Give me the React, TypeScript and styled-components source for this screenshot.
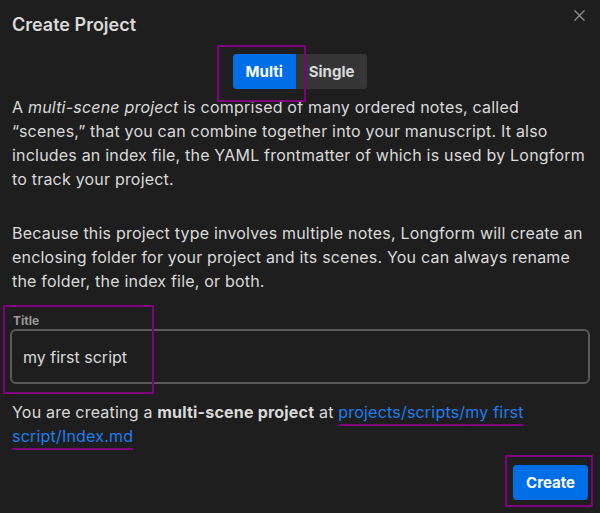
import React, { useState } from 'react';
import styled, { createGlobalStyle } from 'styled-components';

const GlobalStyle = createGlobalStyle`
  html, body {
    margin: 0;
    padding: 0;
    background: #1e1e1e;
  }
  body {
    font-family: Inter, "Noto Sans", sans-serif;
    color: #dadada;
  }
`;

const Modal = styled.div`
  position: relative;
  box-sizing: border-box;
  width: 600px;
  height: 513px;
  padding: 12px 12px 0;
  background: #1e1e1e;
`;

const Title = styled.h1`
  margin: 0;
  font-size: 18px;
  font-weight: 600;
  line-height: 26px;
  color: #dadada;
`;

const CloseButton = styled.button`
  position: absolute;
  top: 6px;
  right: 12px;
  width: 18px;
  height: 18px;
  padding: 0;
  border: none;
  background: none;
  color: #8a8a8a;
  cursor: pointer;
  display: flex;
  align-items: center;
  justify-content: center;
`;

const SegmentRow = styled.div`
  display: flex;
  justify-content: center;
  margin-top: 16px;
`;

const Annotated = styled.div<{ $t: number; $r: number; $b: number; $l: number }>`
  position: relative;
  display: flex;
  &::after {
    content: '';
    position: absolute;
    top: ${(p) => -p.$t}px;
    right: ${(p) => -p.$r}px;
    bottom: ${(p) => -p.$b}px;
    left: ${(p) => -p.$l}px;
    border: 2px solid #800080;
    pointer-events: none;
  }
`;

const Segmented = styled.div`
  display: flex;
  border-radius: 4px;
  background: #363636;
`;

const SegmentButton = styled.button<{ $active: boolean; $side: 'left' | 'right' }>`
  height: 35px;
  padding: 0 13px;
  border: none;
  border-radius: ${(p) => (p.$side === 'left' ? '4px 0 0 4px' : '0 4px 4px 0')};
  font-family: Inter, sans-serif;
  font-size: 15px;
  font-weight: 700;
  color: ${(p) => (p.$active ? '#ffffff' : '#dadada')};
  background: ${(p) => (p.$active ? '#006ee6' : '#363636')};
  cursor: pointer;
`;

const Paragraph = styled.p`
  margin: 6px 0 0;
  font-size: 16px;
  line-height: 24px;
  letter-spacing: 0.2px;
  & + & {
    margin-top: 30px;
  }
`;

const Field = styled.div`
  position: relative;
  margin-top: 21px;
  display: flex;
  flex-direction: column;
`;

const FieldLabel = styled.label`
  font-size: 12px;
  font-weight: 700;
  line-height: 14px;
  color: #9a9a9a;
  margin-left: 1px;
`;

const TextInput = styled.input`
  box-sizing: border-box;
  width: 580px;
  height: 55px;
  margin: 1px 0 0 -2px;
  padding: 0 11px;
  border: 2px solid #5a5a5a;
  border-radius: 6px;
  background: #1e1e1e;
  color: #dadada;
  font-family: Inter, sans-serif;
  font-size: 16px;
  outline: none;
  caret-color: #dadada;
`;

const LabelMark = styled.div`
  position: absolute;
  top: -9px;
  left: -9px;
  width: 151px;
  height: 89px;
  box-sizing: border-box;
  border: 2px solid #800080;
  pointer-events: none;
`;

const Note = styled.p`
  margin: 16px 0 0;
  font-size: 16px;
  line-height: 24px;
  letter-spacing: 0.2px;
  b {
    font-weight: 700;
    color: #dadada;
  }
`;

const PathLink = styled.a`
  color: #1a7ff0;
  text-decoration: underline;
  text-decoration-color: #800080;
  text-decoration-thickness: 2px;
  text-underline-offset: 6px;
`;

const Footer = styled.div`
  display: flex;
  justify-content: flex-end;
  margin-top: 17px;
`;

const PrimaryButton = styled.button`
  height: 35px;
  padding: 0 13px;
  border: none;
  border-radius: 4px;
  background: #006ee6;
  color: #ffffff;
  font-family: Inter, sans-serif;
  font-size: 15px;
  font-weight: 700;
  cursor: pointer;
`;

const CloseIcon = () => (
  <svg width="13" height="13" viewBox="0 0 14 14" fill="none" stroke="currentColor" strokeWidth="1.5" strokeLinecap="round">
    <path d="M2 2 L12 12 M12 2 L2 12" />
  </svg>
);

const App: React.FC = () => {
  const [mode, setMode] = useState<'multi' | 'single'>('multi');
  const [title, setTitle] = useState('my first script');

  return (
    <>
      <GlobalStyle />
      <Modal>
        <Title>Create Project</Title>
        <CloseButton aria-label="Close">
          <CloseIcon />
        </CloseButton>
        <SegmentRow>
          <Segmented>
            <Annotated $t={9} $r={10} $b={13} $l={16}>
              <SegmentButton $side="left" $active={mode === 'multi'} onClick={() => setMode('multi')}>
                Multi
              </SegmentButton>
            </Annotated>
            <SegmentButton $side="right" $active={mode === 'single'} onClick={() => setMode('single')}>
              Single
            </SegmentButton>
          </Segmented>
        </SegmentRow>
        <Paragraph>
          A <em>multi-scene project</em> is comprised of many ordered notes, called “scenes,” that you can combine
          together into your manuscript. It also includes an index file, the YAML frontmatter of which is used by
          Longform to track your project.
        </Paragraph>
        <Paragraph>
          Because this project type involves multiple notes, Longform will create an enclosing folder for your
          project and its scenes. You can always rename the folder, the index file, or both.
        </Paragraph>
        <Field>
          <FieldLabel>Title</FieldLabel>
          <TextInput value={title} onChange={(e) => setTitle(e.target.value)} />
          <LabelMark />
        </Field>
        <Note>
          You are creating a <b>multi-scene project</b> at{' '}
          <PathLink href="#">projects/scripts/{title}/Index.md</PathLink>
        </Note>
        <Footer>
          <Annotated $t={10} $r={5} $b={7} $l={8}>
            <PrimaryButton>Create</PrimaryButton>
          </Annotated>
        </Footer>
      </Modal>
    </>
  );
};

export default App;
